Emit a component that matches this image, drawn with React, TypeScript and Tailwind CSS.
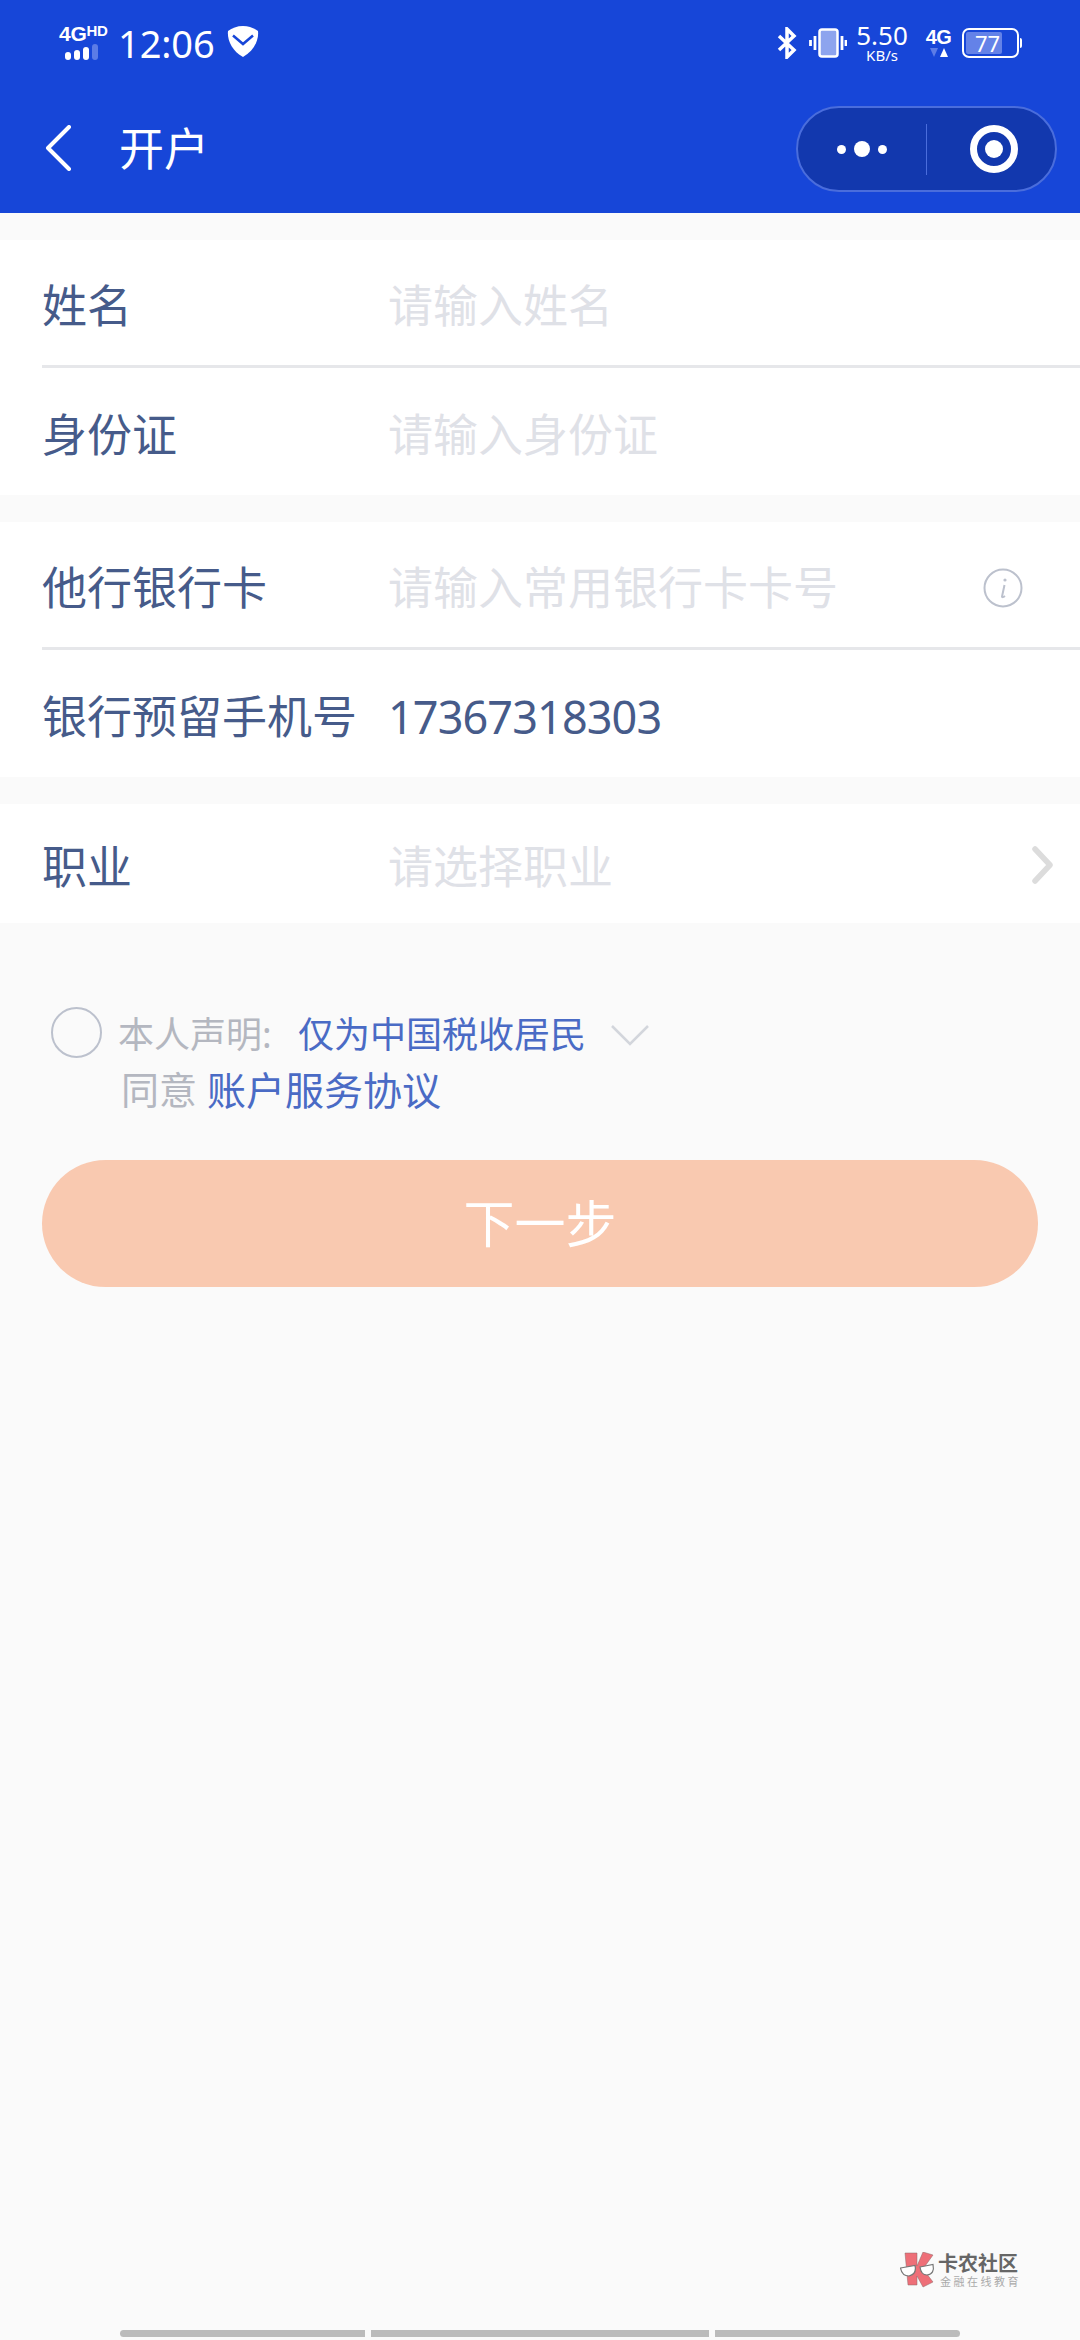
import React from 'react';

const FONT = '[font-family:"Noto_Sans","Noto_Sans_CJK_SC",sans-serif]';

interface RowProps {
  label: string;
  value?: string;
  placeholder?: string;
  right?: React.ReactNode;
  height?: string;
}

const Row: React.FC<RowProps> = ({ label, value, placeholder, right, height = 'h-[127px]' }) => (
  <div className={`relative flex items-center pl-[42px] pt-[5px] ${height}`}>
    <span className="w-[347px] shrink-0 text-[45px] leading-none text-[#465b8a] whitespace-nowrap">{label}</span>
    {value && <span className="-ml-[1px] text-[45px] leading-none text-[#465b8a] tracking-[-0.9px]">{value}</span>}
    {placeholder && <span className="-ml-[1px] text-[45px] leading-none text-[#dfe1e7]">{placeholder}</span>}
    {right}
  </div>
);

const Divider = () => <div className="ml-[42px] h-[3px] bg-[#e6e7ea]" />;

const StatusBar = () => (
  <div className="flex items-center justify-between h-[85px] pl-[59px] pr-[58px] text-white">
    <div className="flex items-center">
      <div className="w-[47px] flex flex-col items-start">
        <div className="flex items-start font-bold leading-none tracking-[-0.3px] [font-family:'Liberation_Sans',sans-serif]">
          <span className="text-[21px] leading-[18px]">4G</span>
          <span className="text-[15px] leading-[12px] [font-weight:900]">HD</span>
        </div>
        <div className="flex items-end gap-[3px] mt-[1px] pl-[6px]">
          <i className="block w-[6px] h-[8px] rounded-[3px] bg-white" />
          <i className="block w-[6px] h-[10px] rounded-[3px] bg-white" />
          <i className="block w-[6px] h-[13px] rounded-[3px] bg-white" />
          <i className="block w-[6px] h-[16px] rounded-[3px] bg-[#5c7ce6]" />
        </div>
      </div>
      <span className="ml-[12px] text-[38px] leading-[40px] tracking-[-0.1px]">12:06</span>
      <svg width="32" height="31" viewBox="0 0 32 31" className="ml-[12px] -mt-[3px]">
        <path d="M16 0C22 0 27 2 31 5C32 14 27 25 16 31C5 25 0 14 1 5C5 2 10 0 16 0Z" fill="#fff" />
        <path d="M6 9.500L16 18L26 9.500" fill="none" stroke="#1746d8" strokeWidth="2.500" />
      </svg>
    </div>
    <div className="flex items-center">
      <svg width="20" height="32" viewBox="0 0 20 32" fill="none" stroke="#fff" strokeWidth="3.500">
        <path d="M2 9L17 23L10 30V2L17 9L2 23" />
      </svg>
      <svg width="38" height="30" viewBox="0 0 38 30" className="ml-[12px]" fill="none">
        <rect x="10.500" y="1.500" width="18" height="27" rx="2.500" fill="#8da4ee" stroke="#fff" strokeWidth="2.500" />
        <path d="M6 8V22M1.500 12V18M33 8V22M37 12V18" stroke="#fff" strokeWidth="2.800" />
      </svg>
      <div className="ml-[8px] w-[54px] flex flex-col items-center">
        <span className="text-[26px] leading-[26px]">5.50</span>
        <span className="text-[15px] leading-[15px]">KB/s</span>
      </div>
      <div className="ml-[16px] flex flex-col items-center w-[27px]">
        <span className="text-[20px] font-bold leading-[18px] tracking-[-0.5px] [font-family:'Liberation_Sans',sans-serif]">4G</span>
        <svg width="20" height="9" viewBox="0 0 20 9" className="mt-[2px]">
          <path d="M1 0H9L5 9Z" fill="#5c7ce6" />
          <path d="M11 9H19L15 0Z" fill="#fff" />
        </svg>
      </div>
      <div className="ml-[10px] flex items-center">
        <div className="relative w-[57px] h-[30px] rounded-[7px] border-[2.500px] border-white overflow-hidden">
          <div className="absolute left-[2px] top-[2px] bottom-[2px] w-[36px] rounded-[2px] bg-[#6482e8]" />
          <span className="absolute inset-0 flex items-center justify-center pr-[6px] text-[22px] leading-none">77</span>
        </div>
        <i className="block ml-[1px] w-[2px] h-[10px] bg-white rounded-r-sm" />
      </div>
    </div>
  </div>
);

const NavBar = () => (
  <div className="relative flex items-center h-[128px] pl-[45px] text-white">
    <svg width="28" height="46" viewBox="0 0 28 46" fill="none" stroke="#fff" strokeWidth="4" strokeLinecap="round" strokeLinejoin="round" className="-mt-[2px]">
      <path d="M24 2L3 23L24 44" />
    </svg>
    <span className="ml-[46px] text-[45px] leading-none -mt-[1px]">开户</span>
    <div className="absolute left-[796px] top-[21px] flex items-center w-[261px] h-[86px] rounded-full bg-[#1238ae] border-2 border-[#4a6ddc]">
      <div className="w-[128px] flex items-center justify-center gap-[8px]">
        <i className="block w-[9px] h-[9px] rounded-full bg-white" />
        <i className="block w-[16px] h-[16px] rounded-full bg-white" />
        <i className="block w-[9px] h-[9px] rounded-full bg-white" />
      </div>
      <i className="block w-[1px] h-[51px] bg-[#4a6ddc]" />
      <div className="flex-1 flex items-center justify-center pl-[6px]">
        <div className="w-[48px] h-[48px] rounded-full border-[7px] border-white flex items-center justify-center">
          <i className="block w-[18px] h-[18px] rounded-full bg-white" />
        </div>
      </div>
    </div>
  </div>
);

const Watermark = () => (
  <div className="absolute left-[900px] top-[2252px] flex items-center">
    <svg width="36" height="36" viewBox="0 0 36 36">
      <path d="M5 1H17V14L23 0L33 3L23 17L33 30L23 35L17 24V33H8Z" fill="#ee6f78" stroke="#8a6a6a" strokeWidth="0.500" />
      <path d="M0.500 16L15 13.500Q17 22 9 24Q2 24 0.500 16Z" fill="#fff" stroke="#777" strokeWidth="1.200" />
      <path d="M20 15L33 12.500Q35 22 27 23Q21 23 20 15Z" fill="#fff" stroke="#777" strokeWidth="1.200" />
    </svg>
    <div className="ml-[2px] flex flex-col">
      <span className="text-[20px] font-bold leading-[22px] text-[#666]">卡农社区</span>
      <span className="text-[11px] leading-[13px] text-[#aaa] tracking-[2.500px] ml-[2px] whitespace-nowrap">金融在线教育</span>
    </div>
  </div>
);

export default function App() {
  return (
    <div className={`relative flex flex-col w-[1080px] h-[2340px] overflow-hidden bg-[#fafafa] ${FONT}`}>
      <div className="bg-[#1746d8] h-[213px] shrink-0">
        <StatusBar />
        <NavBar />
      </div>

      <div className="mt-[27px] bg-white">
        <Row label="姓名" placeholder="请输入姓名" height="h-[125px]" />
        <Divider />
        <Row label="身份证" placeholder="请输入身份证" />
      </div>

      <div className="mt-[27px] bg-white">
        <Row
          label="他行银行卡"
          placeholder="请输入常用银行卡卡号"
          height="h-[125px]"
          right={
            <svg width="40" height="40" viewBox="0 0 40 40" className="absolute left-[983px] top-[46px]" fill="none">
              <circle cx="20" cy="20" r="18.500" stroke="#bcc1cd" strokeWidth="2" />
              <path d="M21.500 17L19 28.500Q19 30 22 28" stroke="#bcc1cd" strokeWidth="2" />
              <circle cx="22" cy="12" r="1.600" fill="#bcc1cd" />
            </svg>
          }
        />
        <Divider />
        <Row label="银行预留手机号" value="17367318303" />
      </div>

      <div className="mt-[27px] bg-white">
        <Row
          label="职业"
          placeholder="请选择职业"
          height="h-[119px]"
          right={
            <svg width="22" height="38" viewBox="0 0 22 38" className="absolute left-[1032px] top-[42px]" fill="none" stroke="#dcdcdc" strokeWidth="5.500" strokeLinecap="round" strokeLinejoin="round">
              <path d="M3 3L18 19L3 35" />
            </svg>
          }
        />
      </div>

      <div className="mt-[84px] pl-[51px]">
        <div className="flex items-center h-[50px]">
          <i className="block w-[51px] h-[51px] rounded-full border-2 border-[#bcc1cd]" />
          <span className="ml-[16px] pt-[5px] text-[36px] leading-none text-[#b4b7c0] w-[180px]">本人声明:</span>
          <span className="pt-[5px] text-[36px] leading-none text-[#4a6bc5]">仅为中国税收居民</span>
          <svg width="38" height="22" viewBox="0 0 38 22" className="ml-[25px] mt-[6px]" fill="none" stroke="#d3d6dc" strokeWidth="2.500">
            <path d="M1 2L19 20L37 2" />
          </svg>
        </div>
        <div className="flex items-center mt-[7px] pl-[70px] h-[50px]">
          <span className="text-[38px] leading-none text-[#b4b7c0]">同意</span>
          <span className="ml-[10px] text-[39px] leading-none text-[#4a6bc5]">账户服务协议</span>
        </div>
      </div>

      <div className="mt-[46px] mx-[42px] h-[127px] rounded-full bg-[#f9c9b0] flex items-center justify-center text-[51px] leading-none text-white">
        下一步
      </div>

      <div className="mt-auto mb-[3px] flex justify-center gap-[6px]">
        <i className="block w-[245px] h-[7px] rounded-l-full bg-[#bbbbbb]" />
        <i className="block w-[338px] h-[7px] bg-[#bbbbbb]" />
        <i className="block w-[245px] h-[7px] rounded-r-full bg-[#bbbbbb]" />
      </div>

      <Watermark />
    </div>
  );
}
